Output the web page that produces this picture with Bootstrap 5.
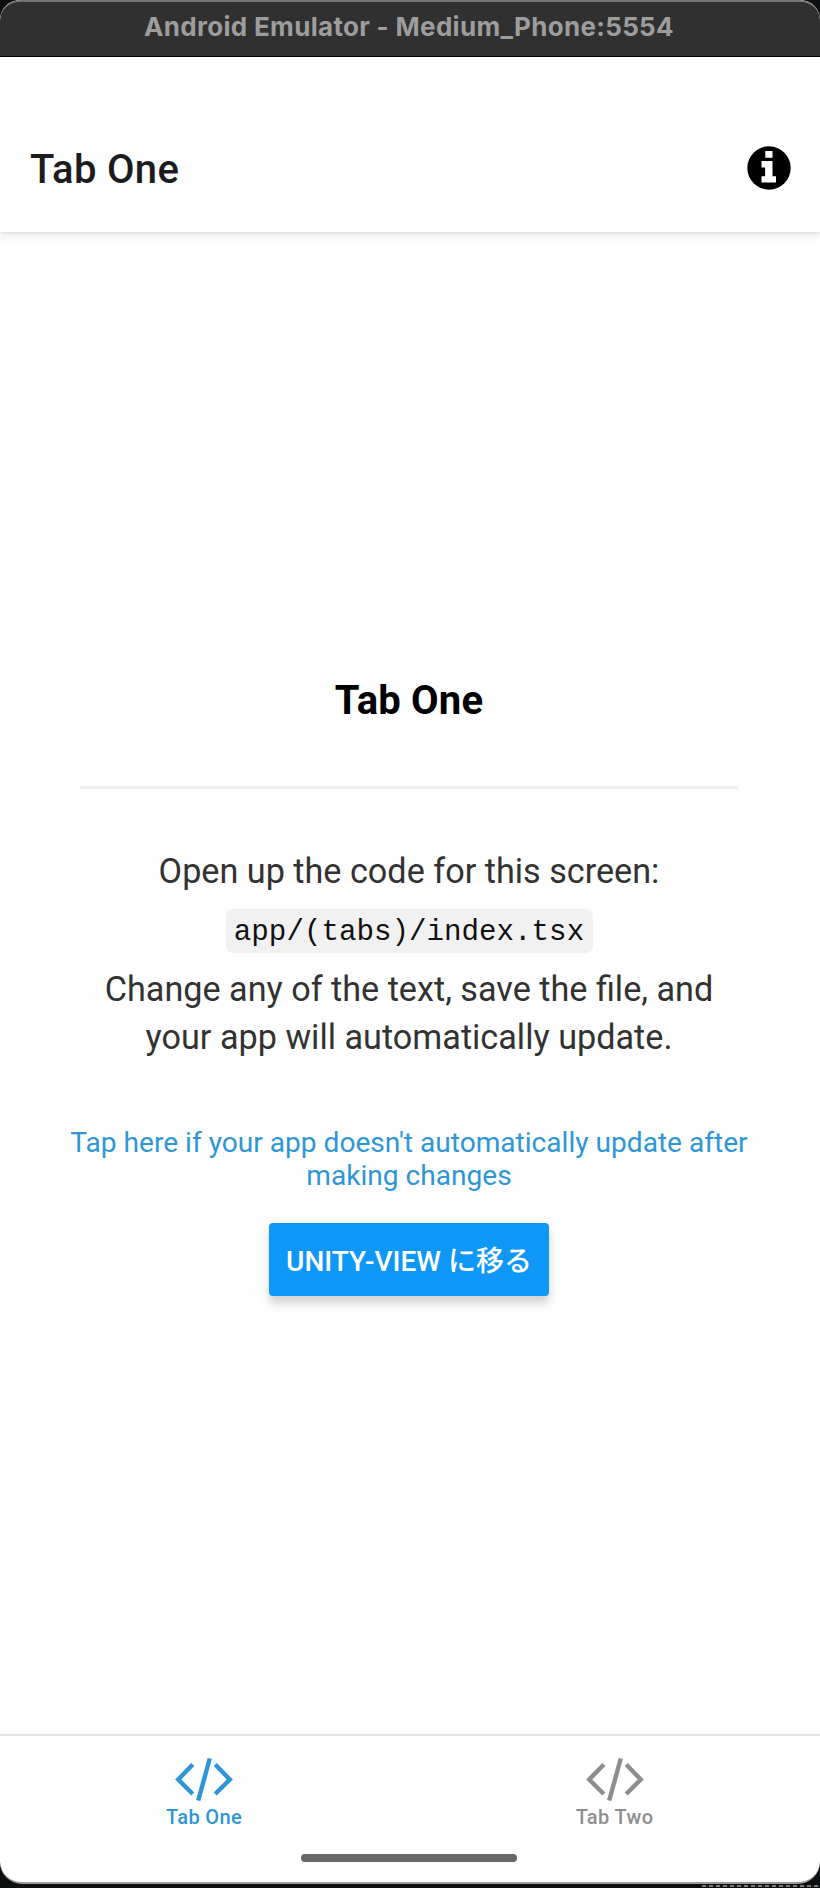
<!DOCTYPE html>
<html lang="ja">

<head>
  <meta charset="UTF-8" />
  <meta name="viewport" content="width=device-width, initial-scale=1.0" />
  <title>Tab One</title>
  <link href="https://cdn.jsdelivr.net/npm/bootstrap@5.3.3/dist/css/bootstrap.min.css" rel="stylesheet" />
  <style>
    body {
      background: #0d0f10;
      font-family: Roboto, "Noto Sans CJK JP", sans-serif;
    }

    .emulator {
      height: 1884px;
      background: #fefefe;
      border-radius: 20px 20px 22px 22px;
      border-bottom: 2px solid #9b9d9b;
    }

    .title-bar {
      height: 57px;
      padding: 0 2px 5px 0;
      background: #303030;
      color: #9d9d9d;
      border-top: 2px solid #737373;
      border-bottom: 1px solid #000;
      border-radius: 20px 20px 0 0;
      font: 700 26px/1 Inter, sans-serif;
      letter-spacing: .31px;
    }

    .app-header {
      height: 175px;
      padding: 46px 29px 0 30px;
      box-shadow: 0 1px 3px rgba(0, 0, 0, .1), 0 6px 8px rgba(0, 0, 0, .05);
    }

    .header-title {
      padding-top: 4px;
      font-size: 40px;
      font-weight: 500;
      line-height: 48px;
      letter-spacing: .3px;
      color: #1c1c1e;
    }

    .screen-title {
      font-size: 40px;
      font-weight: 700;
      line-height: 48px;
      letter-spacing: .15px;
      color: #000;
      margin-top: 445px;
    }

    .screen-body {
      padding-right: 2px;
    }

    .separator {
      width: 658px;
      height: 3px;
      margin: 61px 0 58px;
      background: #eee;
    }

    .help-text {
      width: 690px;
      font-size: 34.2px;
      line-height: 48px;
      color: #323232;
    }

    .code-box {
      width: 367px;
      height: 44px;
      margin: 14px 0 12px;
      border-radius: 7px;
      background: #f1f1f1;
      color: #111;
      font: 29.2px/47px "Liberation Mono", monospace;
    }

    .help-link {
      width: 700px;
      margin-top: 66px;
      font-size: 28.1px;
      line-height: 32.5px;
      color: #2e96d6;
    }

    .btn-unity {
      --bs-btn-color: #fff;
      --bs-btn-bg: #0e97f6;
      --bs-btn-hover-color: #fff;
      --bs-btn-hover-bg: #0b86dc;
      width: 280px;
      height: 73px;
      margin-top: 31px;
      padding: 5px 0 0;
      border: 0;
      border-radius: 4px;
      font-size: 28px;
      font-weight: 500;
      box-shadow: 0 7px 10px rgba(0, 0, 0, .18);
    }

    .tab-bar {
      height: 148px;
      border-top: 2px solid #e4e4e4;
    }

    .tab-item {
      padding: 22px 1px 0 0;
      font-size: 20px;
      font-weight: 500;
      line-height: 24px;
      letter-spacing: .35px;
      color: #8e8e8f;
      text-decoration: none;
    }

    .tab-item.active {
      padding-right: 2px;
      color: #2e96d6;
    }

    .home-bar {
      width: 216px;
      height: 8px;
      margin: 0 2px 20px 0;
      border-radius: 4px;
      background: #666;
    }

    /* desktop peeking out below the window */
    .desktop-strip {
      width: 118px;
      height: 2px;
      margin-top: 1px;
      background: repeating-linear-gradient(90deg, #77797b 0 4px, #141617 4px 7px);
    }
  </style>
</head>

<body>
  <div class="emulator d-flex flex-column overflow-hidden">
    <div class="title-bar d-flex align-items-center justify-content-center flex-shrink-0">
      <span class="title-text">Android Emulator - Medium_Phone:5554</span>
    </div>

    <header class="app-header d-flex align-items-center justify-content-between flex-shrink-0">
      <span class="header-title">Tab One</span>
      <svg width="44" height="44" viewBox="0 0 44 44" role="img" aria-label="Info">
        <circle cx="22" cy="22" r="21.7" fill="#000" />
        <path d="M18.3 5h7.2v6.7h-7.2zM14.5 15h11v15.2H29v6.4H14.5v-6.4h3.6v-8.7h-3.6z" fill="#fff" />
      </svg>
    </header>

    <main class="screen-body d-flex flex-column align-items-center flex-grow-1 text-center">
      <h1 class="screen-title mb-0">Tab One</h1>
      <div class="separator"></div>
      <div class="help-text">Open up the code for this screen:</div>
      <div class="code-box">app/(tabs)/index.tsx</div>
      <div class="help-text">Change any of the text, save the file, and<br />your app will automatically update.</div>
      <a class="help-link text-decoration-none" href="#">Tap here if your app doesn't automatically update after<br />making changes</a>
      <button type="button" class="btn btn-unity">UNITY-VIEW に移る</button>
    </main>

    <nav class="tab-bar d-flex flex-column align-items-center flex-shrink-0">
      <div class="d-flex w-100 flex-grow-1">
        <a class="tab-item active w-50 d-flex flex-column align-items-center" href="#">
          <svg width="58" height="43" viewBox="0 0 58 43" fill="none" stroke="currentColor" stroke-width="4.4">
            <path d="M17.8 6.5L3.2 21.5 17.8 36M40.2 6.5l14.6 15L40.2 36M34.8.5L23.2 42.5" />
          </svg>
          <span class="mt-1">Tab One</span>
        </a>
        <a class="tab-item w-50 d-flex flex-column align-items-center" href="#">
          <svg width="58" height="43" viewBox="0 0 58 43" fill="none" stroke="currentColor" stroke-width="4.4">
            <path d="M17.8 6.5L3.2 21.5 17.8 36M40.2 6.5l14.6 15L40.2 36M34.8.5L23.2 42.5" />
          </svg>
          <span class="mt-1">Tab Two</span>
        </a>
      </div>
      <div class="home-bar"></div>
    </nav>
  </div>
  <div class="desktop-strip ms-auto"></div>

  <script src="https://cdn.jsdelivr.net/npm/bootstrap@5.3.3/dist/js/bootstrap.bundle.min.js"></script>
</body>

</html>
